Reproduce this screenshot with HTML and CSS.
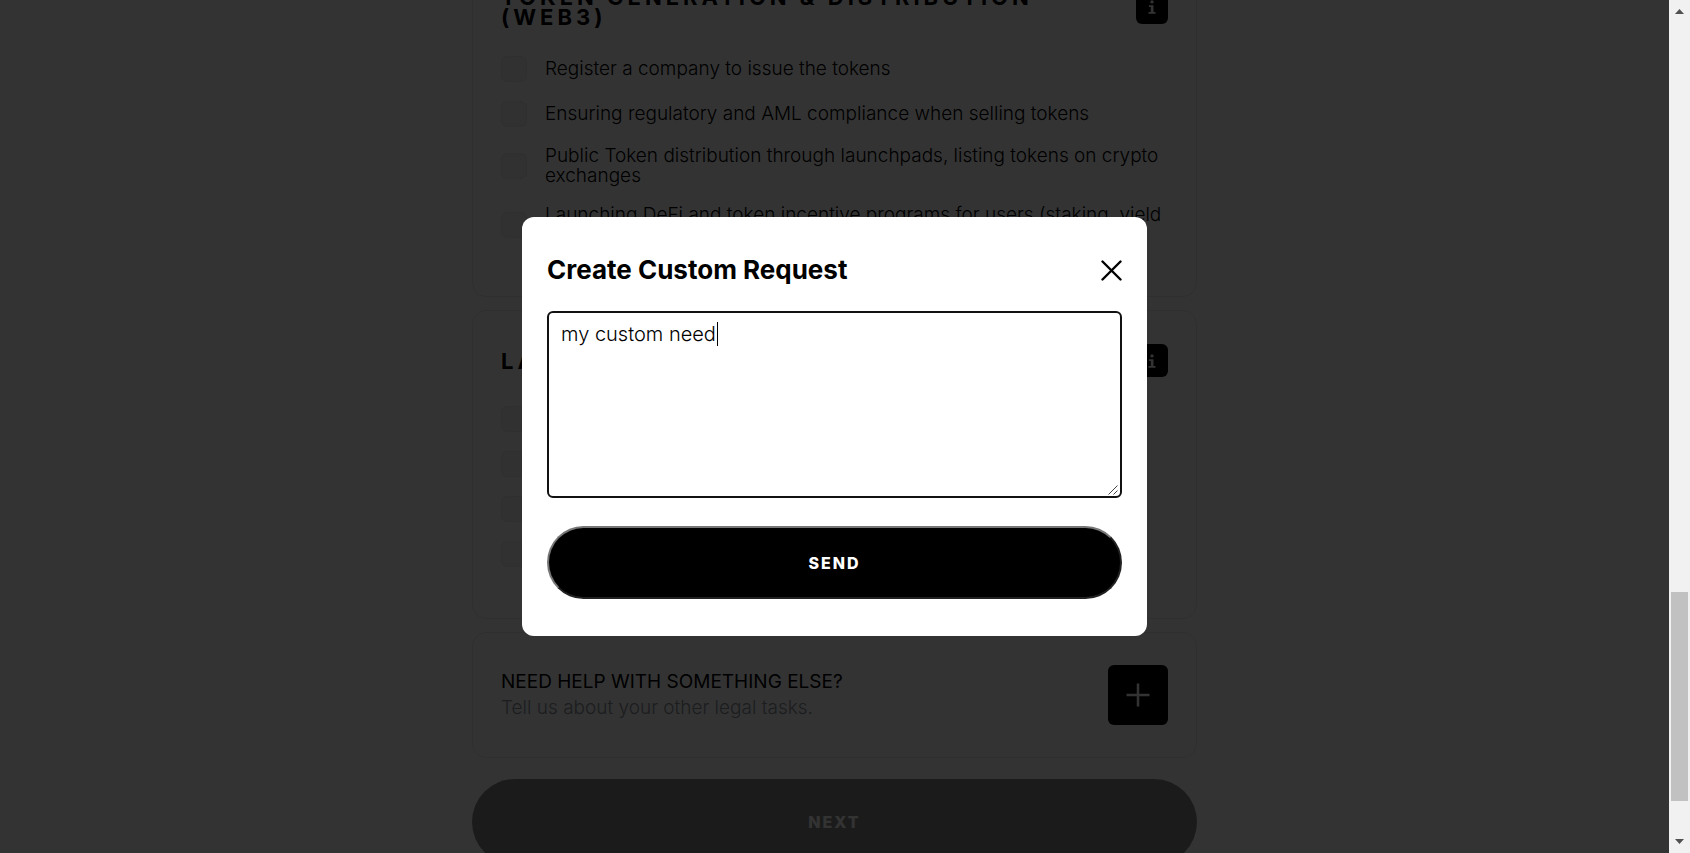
FILE: index.html
```html
<!DOCTYPE html>
<html lang="en">
<head>
<meta charset="utf-8">
<meta name="viewport" content="width=device-width, initial-scale=1">
<title>Create Custom Request</title>
<link rel="stylesheet" href="styles.css">
</head>
<body>
<div class="viewport">
  <main class="page">
    <div class="stack">
      <section class="card">
        <header class="card-head">
          <h2 class="card-title">Token generation &amp; distribution (Web3)</h2>
          <button class="info" type="button" aria-label="More information">
            <svg class="info-icon" viewBox="0 0 8 14"><circle cx="4" cy="1.900" r="1.700"/><path d="M1 5.300h4.500v6.700H7.500V13.700H.5V12H2.800V7H1z"/></svg>
          </button>
        </header>
        <div class="options">
          <label class="option"><input class="tick" type="checkbox"><span>Register a company to issue the tokens</span></label>
          <label class="option"><input class="tick" type="checkbox"><span>Ensuring regulatory and AML compliance when selling tokens</span></label>
          <label class="option"><input class="tick" type="checkbox"><span>Public Token distribution through launchpads, listing tokens on crypto exchanges</span></label>
          <label class="option"><input class="tick" type="checkbox"><span>Launching DeFi and token incentive programs for users (staking, yield farming)</span></label>
        </div>
      </section>
      <section class="card">
        <header class="card-head">
          <h2 class="card-title">La</h2>
          <button class="info" type="button" aria-label="More information">
            <svg class="info-icon" viewBox="0 0 8 14"><circle cx="4" cy="1.900" r="1.700"/><path d="M1 5.300h4.500v6.700H7.500V13.700H.5V12H2.800V7H1z"/></svg>
          </button>
        </header>
        <div class="options">
          <label class="option"><input class="tick" type="checkbox" aria-label="Option 1"></label>
          <label class="option"><input class="tick" type="checkbox" aria-label="Option 2"></label>
          <label class="option"><input class="tick" type="checkbox" aria-label="Option 3"></label>
          <label class="option"><input class="tick" type="checkbox" aria-label="Option 4"></label>
        </div>
      </section>
      <section class="card help">
        <div class="help-text">
          <p class="help-title">NEED HELP WITH SOMETHING ELSE?</p>
          <p class="help-note">Tell us about your other legal tasks.</p>
        </div>
        <button class="add" type="button" aria-label="Add custom request">
          <svg class="add-icon" viewBox="0 0 24 24"><path d="M12 0.500v23M0.500 12h23"/></svg>
        </button>
      </section>
      <button class="next" type="button">NEXT</button>
    </div>
  </main>
  <div class="overlay">
    <form class="modal" role="dialog" aria-labelledby="modal-title">
      <header class="modal-head">
        <h1 class="modal-title" id="modal-title">Create Custom Request</h1>
        <button class="close" type="button" aria-label="Close">
          <svg class="close-icon" viewBox="0 0 21 21"><path d="M1.500 1.500l18 18M19.500 1.500l-18 18"/></svg>
        </button>
      </header>
      <div class="field">
        <textarea class="request" aria-labelledby="modal-title">my custom need</textarea>
        <span class="caret"></span>
        <svg class="grip" viewBox="0 0 10 10"><path d="M.5 9.500l9-9M5.500 9.500l4-4"/></svg>
      </div>
      <button class="send" type="button">SEND</button>
    </form>
  </div>
</div>
<div class="scrollbar" aria-hidden="true">
  <svg class="arrow" viewBox="0 0 21 21"><path d="M6 14h9l-4.500-5z"/></svg>
  <div class="track"><div class="thumb"></div></div>
  <svg class="arrow" viewBox="0 0 21 21"><path d="M6 7h9l-4.500 5z"/></svg>
</div>
</body>
</html>
```
FILE: styles.css
```css
* {
  box-sizing: border-box;
}

body {
  margin: 0;
  height: 100vh;
  display: flex;
  overflow: hidden;
  background: #fff;
  color: #000;
  font-family: Inter, "Liberation Sans", sans-serif;
  font-size: 19px;
  font-weight: 300;
  line-height: 20px;
}

h1, h2, p {
  margin: 0;
}

button {
  font-family: inherit;
  padding: 0;
  cursor: pointer;
}

.viewport {
  position: relative;
  flex: 1;
  overflow: hidden;
}

/* The list is scrolled part of the way through its first card. */
.page {
  margin-top: -47px;
  padding: 0 16px;
}

.stack {
  max-width: 725px;
  margin: 0 auto;
  display: flex;
  flex-direction: column;
  gap: 13px;
}

.card {
  border: 1px solid #e9e9e9;
  border-radius: 14px;
  padding: 33px 28px;
}

.card-head {
  display: flex;
  align-items: center;
  justify-content: space-between;
  gap: 24px;
  margin-bottom: 29px;
}

.card-title {
  font-size: 22px;
  font-weight: 700;
  line-height: 20px;
  letter-spacing: 4px;
  text-transform: uppercase;
}

.info {
  flex: none;
  width: 32px;
  height: 33px;
  display: grid;
  place-items: center;
  border: 0;
  border-radius: 6px;
  background: #000;
}

.info-icon {
  width: 8px;
  height: 14px;
  fill: #fff;
}

.options {
  display: flex;
  flex-direction: column;
  gap: 19px;
  padding-bottom: 18px;
}

.option {
  display: flex;
  align-items: center;
  gap: 18px;
}

.tick {
  appearance: none;
  flex: none;
  width: 26px;
  height: 26px;
  margin: 0;
  border: 1px solid #e9e9e9;
  border-radius: 6px;
  background: #f5f5f5;
}

.help {
  display: flex;
  align-items: center;
  justify-content: space-between;
  padding: 32px 28px;
}

.help-text {
  line-height: 26px;
}

.help-title {
  font-weight: 400;
}

.help-note {
  color: #8c919c;
}

.add {
  width: 60px;
  height: 60px;
  display: grid;
  place-items: center;
  border: 0;
  border-radius: 6px;
  background: #000;
}

.add-icon {
  width: 24px;
  height: 24px;
  stroke: #fff;
  stroke-width: 2.5;
}

.next {
  margin-top: 8px;
  height: 86px;
  border: 0;
  border-radius: 43px;
  background: #878787;
  color: #fff;
  font-size: 16px;
  font-weight: 800;
  letter-spacing: 2px;
}

.overlay {
  position: absolute;
  inset: 0;
  display: flex;
  align-items: center;
  justify-content: center;
  padding: 16px;
  background: rgba(0, 0, 0, 0.8);
}

.modal {
  width: 100%;
  max-width: 625px;
  display: flex;
  flex-direction: column;
  padding: 37px 25px;
  border-radius: 12px;
  background: #fff;
}

.modal-head {
  display: flex;
  align-items: center;
  justify-content: space-between;
  margin-bottom: 25px;
}

.modal-title {
  font-size: 26px;
  font-weight: 700;
  line-height: 32px;
}

.close {
  display: flex;
  border: 0;
  background: none;
}

.close-icon {
  width: 21px;
  height: 21px;
  fill: none;
  stroke: #000;
  stroke-width: 2.4;
  stroke-linecap: round;
}

.field {
  position: relative;
  display: flex;
  margin-bottom: 28px;
}

.request {
  width: 100%;
  height: 187px;
  padding: 9px 12px;
  border: 2px solid #111;
  border-radius: 6px;
  outline: 0;
  background: #fff;
  color: #000;
  font-family: inherit;
  font-size: 20px;
  font-weight: 300;
  line-height: 24px;
  resize: none;
}

.caret {
  position: absolute;
  left: 170px;
  top: 11px;
  width: 1px;
  height: 24px;
  background: #000;
}

.grip {
  position: absolute;
  right: 4px;
  bottom: 3px;
  width: 10px;
  height: 10px;
  stroke: #444;
}

.send {
  height: 73px;
  border: 2px solid;
  border-color: #767676 #212121 #212121 #767676;
  border-radius: 37px;
  background: #000;
  color: #fff;
  font-size: 16px;
  font-weight: 800;
  letter-spacing: 2px;
}

.scrollbar {
  flex: none;
  width: 21px;
  display: flex;
  flex-direction: column;
  background: #f1f1f1;
}

.arrow {
  width: 21px;
  height: 21px;
  fill: #505050;
}

.track {
  flex: 1;
  display: grid;
  grid-template-rows: 571fr 209fr 31fr;
  padding: 0 2px;
}

.thumb {
  grid-row: 2;
  background: #c1c1c1;
}
```
